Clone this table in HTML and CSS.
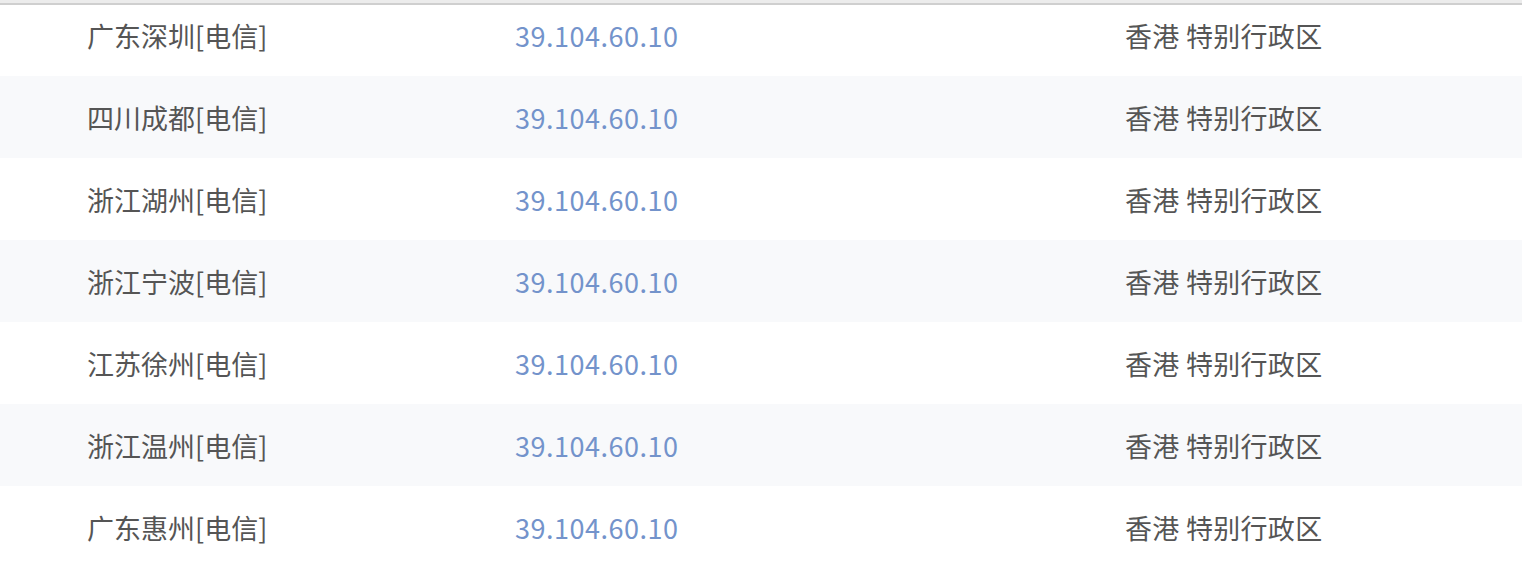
FILE: index.html
```html
<!DOCTYPE html>
<html lang="zh-CN">
<head>
<meta charset="utf-8">
<title>测速节点</title>
<link rel="stylesheet" href="styles.css">
</head>
<body>
<div class="topline"></div>
<div class="table">
  <div class="row row-first"><span class="cell node">广东深圳[电信]</span><span class="cell ip">39.104.60.10</span><span class="cell loc">香港 特别行政区</span></div>
  <div class="row alt"><span class="cell node">四川成都[电信]</span><span class="cell ip">39.104.60.10</span><span class="cell loc">香港 特别行政区</span></div>
  <div class="row"><span class="cell node">浙江湖州[电信]</span><span class="cell ip">39.104.60.10</span><span class="cell loc">香港 特别行政区</span></div>
  <div class="row alt"><span class="cell node">浙江宁波[电信]</span><span class="cell ip">39.104.60.10</span><span class="cell loc">香港 特别行政区</span></div>
  <div class="row"><span class="cell node">江苏徐州[电信]</span><span class="cell ip">39.104.60.10</span><span class="cell loc">香港 特别行政区</span></div>
  <div class="row alt"><span class="cell node">浙江温州[电信]</span><span class="cell ip">39.104.60.10</span><span class="cell loc">香港 特别行政区</span></div>
  <div class="row"><span class="cell node">广东惠州[电信]</span><span class="cell ip">39.104.60.10</span><span class="cell loc">香港 特别行政区</span></div>
</div>
</body>
</html>
```
FILE: styles.css
```css
html, body {
  margin: 0;
  padding: 0;
  background: #ffffff;
}
body {
  font-family: "Noto Sans CJK SC", "Microsoft YaHei", sans-serif;
  font-size: 27px;
  color: #555555;
  overflow: hidden;
}
.topline {
  height: 3px;
  background: #ececec;
  border-bottom: 2px solid #cfcfcf;
}
.table {
  display: flex;
  flex-direction: column;
}
.row {
  display: grid;
  grid-template-columns: 428px 610px 1fr;
  align-items: center;
  height: 82px;
  padding-left: 87px;
  box-sizing: border-box;
}
.row-first {
  height: 71px;
  padding-bottom: 11px;
}
.row.alt {
  background: #f8f9fb;
}
.cell {
  line-height: 1;
  white-space: nowrap;
}
.ip {
  color: #7393cb;
  letter-spacing: 0.5px;
}
.loc {
  letter-spacing: 0.3px;
}
```
